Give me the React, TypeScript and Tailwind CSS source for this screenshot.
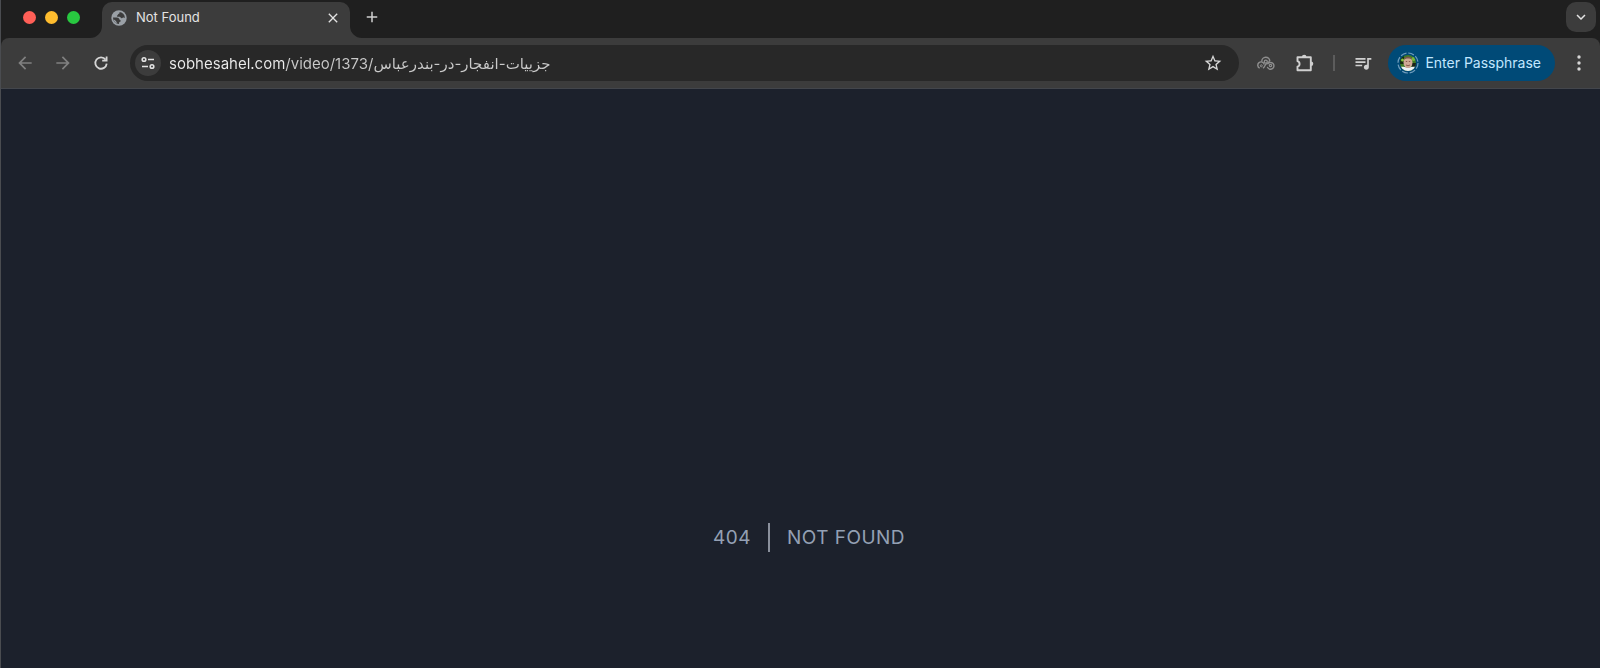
import type { ReactNode } from "react";
import {
  MdArrowBack,
  MdArrowForward,
  MdClose,
  MdKeyboardArrowDown,
  MdAdd,
  MdQueueMusic,
  MdStarBorder,
} from "react-icons/md";

type IconButtonProps = {
  label: string;
  className?: string;
  children: ReactNode;
};

function IconButton({ label, className = "", children }: IconButtonProps) {
  return (
    <button
      type="button"
      aria-label={label}
      className={`flex shrink-0 items-center justify-center ${className}`}
    >
      {children}
    </button>
  );
}

function GlobeIcon() {
  return (
    <svg viewBox="0 0 16 16" className="size-4 shrink-0">
      <circle cx="8" cy="8" r="7.7" fill="#9aa0a6" />
      <path
        d="M8.200 2C9 2.600 8.600 3.400 7.800 3.700 6.900 4 7 5 6.300 5.400 5.700 5.700 5.800 6.600 6.600 6.700l2 .1c.9 0 1.100 1.500 2.100 1.500.9 0 1.200-.7 2-.7l1.200.3A6 6 0 0 0 8.200 2z"
        fill="#3c3c3c"
      />
      <path
        d="M2 7.600c1.500-.3 3.500-.2 5 .2 1.300.4 1.300 2 2.300 2.400.8.3.5 1.300-.3 1.500-1 .2-.8 1.200-1 2.300A6 6 0 0 1 2 7.600z"
        fill="#3c3c3c"
      />
      <path d="M2.500 9.500c1 .2 1.600.9 2.300 1.600.6.7 1 1.300.9 2.300A6 6 0 0 1 2.500 9.500z" fill="#9aa0a6" />
    </svg>
  );
}

function ReloadIcon() {
  return (
    <svg viewBox="0 0 16 16" className="size-4" fill="none" stroke="#d6d6d6">
      <path d="M12.600 4.600A5.700 5.700 0 1 0 13.700 8.600" strokeWidth="1.800" />
      <path d="M13.600 1.600V5.700H9.200" strokeWidth="1.800" />
    </svg>
  );
}

function SiteInfoIcon() {
  return (
    <svg
      viewBox="0 0 16 16"
      className="size-4"
      fill="none"
      stroke="#e3e3e3"
      strokeWidth="1.600"
    >
      <circle cx="4" cy="4.500" r="1.800" />
      <path d="M8 4.500h6M2 11.500h6" />
      <circle cx="12" cy="11.500" r="1.800" />
    </svg>
  );
}

function PasskeysIcon() {
  return (
    <svg viewBox="0 0 18 16" className="h-4 w-[18px]" fill="none" stroke="#8e8e8e">
      <path d="M4.800 6.300a4 4 0 0 1 8-.2M2.700 13.200A3.300 3.300 0 1 1 7.300 9.500" strokeWidth="1.400" />
      <circle cx="8.800" cy="6.600" r="1.500" strokeWidth="1.300" />
      <path d="M10.500 9.300a3.400 3.400 0 1 1-.2 2.600" strokeWidth="1.400" />
      <circle cx="13.500" cy="10.500" r="1.200" strokeWidth="1.200" />
      <path d="M12.500 5.500c.2 2.500-2.800 2.500-4 4.200-.8 1.200-.8 2.600-2.600 3.400" strokeWidth="1.300" />
      <circle cx="4.300" cy="10.800" r="1" />
    </svg>
  );
}

function ExtensionsIcon() {
  return (
    <svg viewBox="0 0 20 20" className="size-5">
      <path
        d="M2.500 4.200H15.800V17.300H2.500V13.600a2.800 2.800 0 0 0 0-5.400z"
        fill="none"
        stroke="#d0d0d0"
        strokeWidth="1.900"
        strokeLinejoin="round"
      />
      <path d="M6.900 4a2.300 2.300 0 0 1 4.600 0zM16 8.500a2.300 2.300 0 0 1 0 4.600z" fill="#d0d0d0" />
    </svg>
  );
}

function Avatar() {
  return (
    <svg viewBox="0 0 22 22" className="size-[22px] shrink-0">
      <clipPath id="face">
        <circle cx="11" cy="11" r="8" />
      </clipPath>
      <circle
        cx="11"
        cy="11"
        r="10"
        fill="none"
        stroke="#6f9dbd"
        strokeWidth="1.200"
        strokeDasharray="6 1.850"
      />
      <g clipPath="url(#face)">
        <path d="M0 0h22v22H0z" fill="#3f7a24" />
        <path d="M0 0h7v12H0z" fill="#142b12" />
        <circle cx="5.500" cy="8" r="1.500" fill="#8cc63f" />
        <circle cx="16.500" cy="7" r="2" fill="#79b83a" />
        <path d="M15 11h5v4h-5z" fill="#1c2418" />
        <path d="M2 22V15.500c3-1.500 5 0 9 0s6-1.500 9 0V22z" fill="#eef3f6" />
        <ellipse cx="11" cy="10.500" rx="4.500" ry="5.500" fill="#cfa996" />
        <path d="M7 7.500c0-4 8-4 8 0-2-1.500-6-1.500-8 0z" fill="#7a5a4c" />
        <path d="M8.800 9.500h1.400M11.800 9.500h1.400M9 13q2 1.500 4 0" stroke="#8a5a4c" fill="none" />
      </g>
    </svg>
  );
}

function TabFoot({ flip = false }: { flip?: boolean }) {
  return (
    <svg
      viewBox="0 0 12 12"
      className={flip ? "size-3 shrink-0 -scale-x-100" : "size-3 shrink-0"}
    >
      <path d="M12 0v12H0A12 12 0 0 0 12 0z" fill="#3c3c3c" />
    </svg>
  );
}

function TabStrip() {
  return (
    <div className="flex h-[38px] items-start bg-[#1f1f1f]">
      <div className="flex h-[35px] items-center gap-[9px] pr-[10px] pl-[22px]">
        <button type="button" aria-label="Close window" className="size-[13px] rounded-full bg-[#ff5f57]" />
        <button type="button" aria-label="Minimize window" className="size-[13px] rounded-full bg-[#febc2e]" />
        <button type="button" aria-label="Zoom window" className="size-[13px] rounded-full bg-[#28c840]" />
      </div>

      {/* Active tab */}
      <div className="flex h-full items-end pt-[2px]">
        <TabFoot />
        <div className="h-full w-[248px] rounded-t-[10px] bg-[#3c3c3c] px-[9px]">
          <div className="flex h-[31px] items-center gap-[9px]">
            <GlobeIcon />
            <span className="flex-1 text-[13px] text-[#e3e3e3]">Not Found</span>
            <IconButton label="Close tab" className="size-4 text-[#e3e3e3]">
              <MdClose className="size-4" />
            </IconButton>
          </div>
        </div>
        <TabFoot flip />
      </div>

      <IconButton label="New tab" className="h-[34px] w-5 text-[#d0d0d0]">
        <MdAdd className="size-[18px]" />
      </IconButton>

      <div className="flex flex-1 justify-end pt-[2px] pr-1">
        <IconButton label="Search tabs" className="size-[30px] rounded-[10px] bg-[#3c3c3c] text-[#e3e3e3]">
          <MdKeyboardArrowDown className="size-[18px]" />
        </IconButton>
      </div>
    </div>
  );
}

function Toolbar() {
  return (
    <div className="bg-[#1f1f1f]">
      <div className="flex h-[51px] items-center rounded-t-lg border-b border-[#43464c] bg-[#3c3c3c] pr-[11px] pl-[5px]">
        <IconButton label="Back" className="h-9 w-[38px] text-[#808080]">
          <MdArrowBack className="size-5" />
        </IconButton>
        <IconButton label="Forward" className="h-9 w-[38px] text-[#808080]">
          <MdArrowForward className="size-5" />
        </IconButton>
        <IconButton label="Reload" className="h-9 w-[38px]">
          <ReloadIcon />
        </IconButton>

        {/* Address bar, the domain is brighter than the path */}
        <div className="ml-[10px] flex h-9 flex-1 items-center rounded-full bg-[#282828] pr-4 pl-[5px]">
          <IconButton label="View site information" className="size-[26px] rounded-full bg-[#3c3c3c]">
            <SiteInfoIcon />
          </IconButton>
          <input
            type="text"
            aria-label="Address"
            defaultValue="sobhesahel.com/video/1373/جزییات-انفجار-در-بندرعباس"
            className="ml-2 h-full flex-1 bg-[linear-gradient(to_right,#ececec_117px,#cacaca_117px)] bg-clip-text text-[15px] text-transparent caret-white outline-none"
          />
          <IconButton label="Bookmark this page" className="size-5 text-[#d6d6d6]">
            <MdStarBorder className="size-5" />
          </IconButton>
        </div>

        <IconButton label="Passkeys" className="ml-[18px] h-9 w-[18px]">
          <PasskeysIcon />
        </IconButton>
        <IconButton label="Extensions" className="ml-5 h-9 w-5">
          <ExtensionsIcon />
        </IconButton>
        <div className="ml-[18px] h-4 w-[2px] bg-[#5c5c5c]" />
        <IconButton label="Media controls" className="ml-[18px] h-9 w-5 text-[#d0d0d0]">
          <MdQueueMusic className="size-5" />
        </IconButton>
        <button
          type="button"
          className="ml-[15px] flex h-9 shrink-0 items-center gap-[6px] rounded-full bg-[#004a77] pr-[14px] pl-[9px] text-sm whitespace-nowrap text-[#c2e7ff]"
        >
          <Avatar />
          Enter Passphrase
        </button>
        <IconButton label="Menu" className="ml-[14px] h-9 w-5">
          <svg viewBox="0 0 4 16" className="h-4 w-1" fill="#d6d6d6">
            <circle cx="2" cy="2" r="1.700" />
            <circle cx="2" cy="8" r="1.700" />
            <circle cx="2" cy="14" r="1.700" />
          </svg>
        </IconButton>
      </div>
    </div>
  );
}

export default function App() {
  return (
    <div className="flex min-h-screen flex-col border-l border-[#4a4c50] bg-[#1c212c] font-['Inter','DejaVu_Sans',sans-serif]">
      <header>
        <TabStrip />
        <Toolbar />
      </header>

      <main className="flex flex-1 flex-col items-center">
        <div className="grow-[15]" />
        <div className="flex items-center text-[19px] leading-[29px] tracking-wide text-[#94a0b4]">
          <div className="border-r-2 border-[#8a909c] px-[17px]">404</div>
          <h1 className="ml-[17px] uppercase">Not Found</h1>
        </div>
        <div className="grow-[4]" />
      </main>
    </div>
  );
}
